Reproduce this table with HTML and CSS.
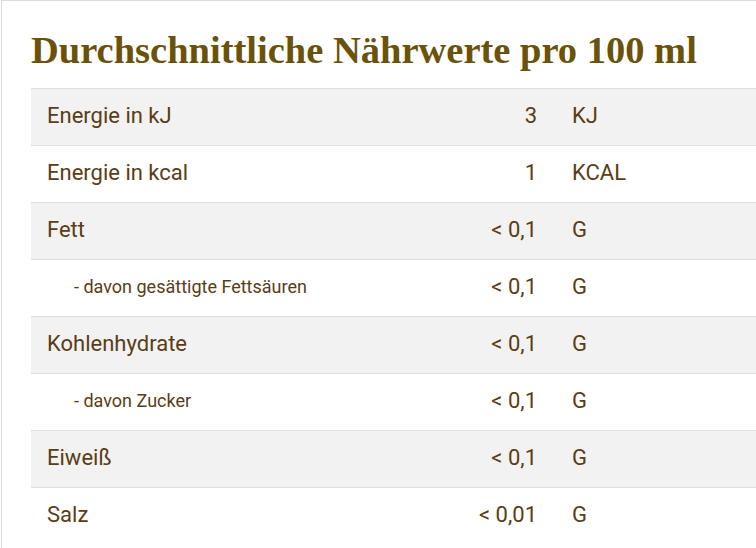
FILE: index.html
```html
<!DOCTYPE html>
<html lang="de">
<head>
<meta charset="utf-8">
<link rel="stylesheet" href="styles.css">
</head>
<body>
<div class="panel">
  <h2 class="title">Durchschnittliche Nährwerte pro 100 ml</h2>
  <table class="nutrition">
    <tbody>
      <tr class="odd"><td class="label">Energie in kJ</td><td class="value">3</td><td class="unit">KJ</td></tr>
      <tr><td class="label">Energie in kcal</td><td class="value">1</td><td class="unit">KCAL</td></tr>
      <tr class="odd"><td class="label">Fett</td><td class="value">&lt; 0,1</td><td class="unit">G</td></tr>
      <tr><td class="label sub">- davon gesättigte Fettsäuren</td><td class="value">&lt; 0,1</td><td class="unit">G</td></tr>
      <tr class="odd"><td class="label">Kohlenhydrate</td><td class="value">&lt; 0,1</td><td class="unit">G</td></tr>
      <tr><td class="label sub">- davon Zucker</td><td class="value">&lt; 0,1</td><td class="unit">G</td></tr>
      <tr class="odd"><td class="label">Eiweiß</td><td class="value">&lt; 0,1</td><td class="unit">G</td></tr>
      <tr><td class="label">Salz</td><td class="value">&lt; 0,01</td><td class="unit">G</td></tr>
    </tbody>
  </table>
</div>
</body>
</html>
```

FILE: styles.css
```css
html, body {
  margin: 0;
  padding: 0;
  background: #fff;
}
body {
  overflow: hidden;
}
.panel {
  margin-left: 1px;
  width: 900px;
  border-top: 1px solid #dcdcdc;
  border-left: 1px solid #dcdcdc;
  padding: 25px 0 40px 29px;
  box-sizing: border-box;
}
.title {
  margin: 0 0 14px 0;
  font-family: "Liberation Serif", "Times New Roman", serif;
  font-weight: bold;
  font-size: 38.5px;
  line-height: 48px;
  color: #6b5209;
}
.nutrition {
  border-collapse: collapse;
  width: 857px;
  table-layout: fixed;
  font-family: Roboto, "Noto Sans", sans-serif;
  color: #5a3d15;
}
.nutrition tr {
  border-top: 1px solid #dedede;
}
.nutrition tr.odd {
  background: #f2f2f2;
}
.nutrition td {
  padding: 15px 16px 17px 16px;
  font-size: 22px;
  line-height: 24px;
  height: 24px;
}
.nutrition td.label {
  width: 390px;
}
.nutrition td.sub {
  font-size: 18px;
  padding-left: 43px;
}
.nutrition td.value {
  width: 68px;
  text-align: right;
}
.nutrition td.unit {
  width: 300px;
  padding-left: 19px;
}
```
